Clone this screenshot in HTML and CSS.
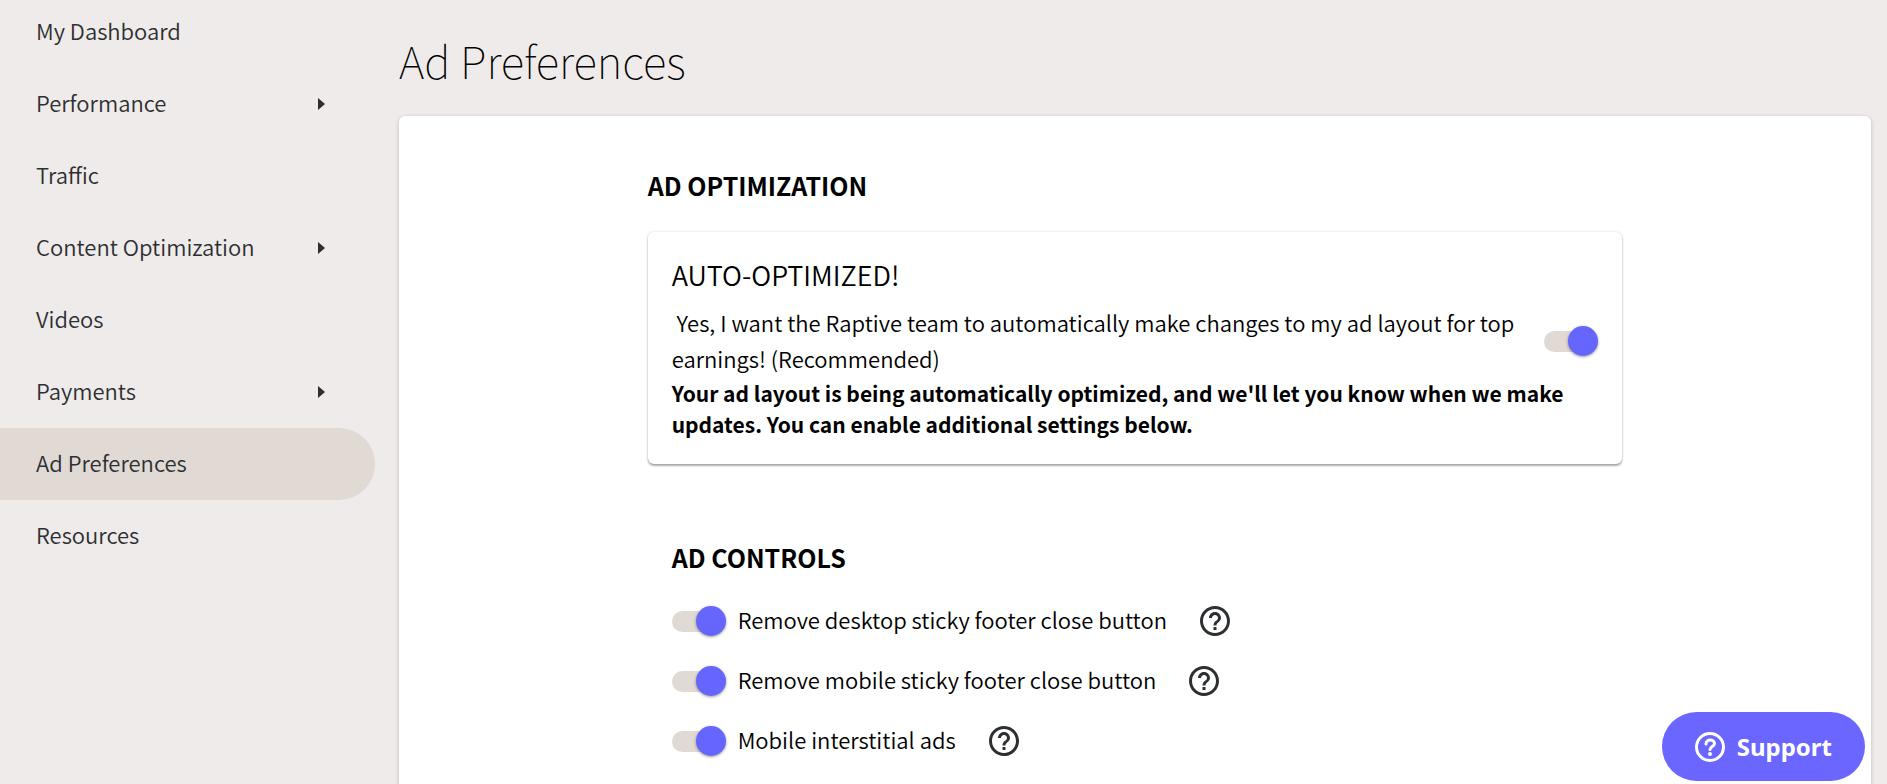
FILE: index.html
```html
<!DOCTYPE html>
<html lang="en">
<head>
    <meta charset="UTF-8">
    <meta name="viewport" content="width=device-width, initial-scale=1.0">
    <title>Ad Preferences</title>
    <link rel="stylesheet" href="styles.css">
</head>
<body>
    <!-- Shared icons -->
    <svg class="icon-defs" aria-hidden="true">
        <symbol id="icon-help" viewBox="0 0 24 24">
            <path d="M11 18h2v-2h-2v2zm1-16C6.48 2 2 6.48 2 12s4.48 10 10 10 10-4.48 10-10S17.52 2 12 2zm0 18c-4.41 0-8-3.59-8-8s3.59-8 8-8 8 3.59 8 8-3.59 8-8 8zm0-14c-2.21 0-4 1.79-4 4h2c0-1.1.9-2 2-2s2 .9 2 2c0 2-3 1.75-3 5h2c0-2.25 3-2.5 3-5 0-2.21-1.79-4-4-4z"/>
        </symbol>
        <symbol id="icon-arrow" viewBox="0 0 7 12">
            <path d="M0 0l7 6-7 6z"/>
        </symbol>
    </svg>

    <div class="layout">
        <nav class="sidebar">
            <a class="nav-link" href="#">My Dashboard</a>
            <a class="nav-link" href="#">Performance <svg class="nav-arrow"><use href="#icon-arrow"/></svg></a>
            <a class="nav-link" href="#">Traffic</a>
            <a class="nav-link" href="#">Content Optimization <svg class="nav-arrow"><use href="#icon-arrow"/></svg></a>
            <a class="nav-link" href="#">Videos</a>
            <a class="nav-link" href="#">Payments <svg class="nav-arrow"><use href="#icon-arrow"/></svg></a>
            <a class="nav-link active" href="#">Ad Preferences</a>
            <a class="nav-link" href="#">Resources</a>
        </nav>

        <main class="content">
            <h1 class="page-title">Ad Preferences</h1>

            <div class="panel">
                <div class="panel-inner">
                    <h2 class="section-title">AD OPTIMIZATION</h2>

                    <section class="card">
                        <h3 class="card-title">AUTO-OPTIMIZED!</h3>
                        <div class="card-row">
                            <label class="card-label" for="auto-optimize">&nbsp;Yes, I want the Raptive team to automatically make changes to my ad layout for top earnings! (Recommended)</label>
                            <input class="switch" type="checkbox" id="auto-optimize" checked>
                        </div>
                        <p class="card-note">Your ad layout is being automatically optimized, and we'll let you know when we make updates. You can enable additional settings below.</p>
                    </section>

                    <section class="controls">
                        <h2 class="section-title">AD CONTROLS</h2>
                        <div class="control-row">
                            <input class="switch" type="checkbox" id="desktop-footer" checked>
                            <label class="control-label" for="desktop-footer">Remove desktop sticky footer close button</label>
                            <button class="help-button" type="button" aria-label="Help"><svg class="help-icon"><use href="#icon-help"/></svg></button>
                        </div>
                        <div class="control-row">
                            <input class="switch" type="checkbox" id="mobile-footer" checked>
                            <label class="control-label" for="mobile-footer">Remove mobile sticky footer close button</label>
                            <button class="help-button" type="button" aria-label="Help"><svg class="help-icon"><use href="#icon-help"/></svg></button>
                        </div>
                        <div class="control-row">
                            <input class="switch" type="checkbox" id="interstitial" checked>
                            <label class="control-label" for="interstitial">Mobile interstitial ads</label>
                            <button class="help-button" type="button" aria-label="Help"><svg class="help-icon"><use href="#icon-help"/></svg></button>
                        </div>
                    </section>
                </div>
            </div>
        </main>
    </div>

    <button class="support-button" type="button">
        <svg class="support-icon" viewBox="0 0 30 30">
            <circle cx="15" cy="15" r="13.5" fill="none" stroke="currentColor" stroke-width="3"/>
            <path d="M11 12c0-5.500 8.500-5 8.500-.5 0 3-4.500 3-4.500 6" fill="none" stroke="currentColor" stroke-width="3" stroke-linecap="round"/>
            <circle cx="15" cy="22" r="2" fill="currentColor"/>
        </svg>
        Support
    </button>
</body>
</html>
```
FILE: styles.css
```css
:root {
    --color-background: #efebea;
    --color-active: #e0d9d4;
    --color-accent: #6666ff;
    --color-support: #6a66ff;
    --color-icon: #2d3032;
    --font-primary: 'Noto Sans CJK SC', sans-serif;
}

* {
    margin: 0;
    padding: 0;
    box-sizing: border-box;
}

body {
    font-family: var(--font-primary);
    font-size: 22px;
    font-weight: 350;
    line-height: 36px;
    color: #000;
    background: var(--color-background);
    overflow: hidden;
}

.icon-defs {
    display: none;
}

.layout {
    display: flex;
    gap: 24px;
    height: 100vh;
}

/* Sidebar */
.sidebar {
    width: 375px;
    flex-shrink: 0;
    margin-top: -4px;
}

.nav-link {
    display: flex;
    align-items: center;
    justify-content: space-between;
    height: 72px;
    padding: 0 50px 4px 36px;
    border-radius: 0 36px 36px 0;
    color: #2d3032;
    text-decoration: none;
}

.nav-link.active {
    background: var(--color-active);
}

.nav-arrow {
    width: 7px;
    height: 12px;
    margin-top: 4px;
    fill: currentColor;
}

/* Main content */
.content {
    flex: 1;
    margin-right: 16px;
}

.page-title {
    padding: 30px 0 26px;
    font-size: 44px;
    font-weight: 100;
    line-height: 60px;
}

.panel {
    min-height: 100vh;
    padding: 47px 5px;
    background: #fff;
    border-radius: 6px;
    box-shadow: 0 1px 4px rgba(0, 0, 0, 0.2);
}

.panel-inner {
    width: calc(100% * 2 / 3);
    margin: 0 auto;
}

.section-title {
    font-size: 25px;
    font-weight: 700;
    line-height: 44px;
}

/* Auto optimize card */
.card {
    margin-top: 25px;
    padding: 22px 24px 24px;
    border-radius: 6px;
    box-shadow: 0 2px 2px rgba(0, 0, 0, 0.3), 0 0 3px rgba(0, 0, 0, 0.15);
}

.card-title {
    margin-bottom: 8px;
    font-size: 27px;
    font-weight: 350;
    line-height: 42px;
}

.card-row {
    display: flex;
    align-items: center;
    gap: 24px;
}

.card-label {
    flex: 1;
    padding-bottom: 2px;
}

.card-note {
    font-size: 21px;
    font-weight: 700;
    line-height: 31px;
}

/* Toggle switch */
.switch {
    appearance: none;
    position: relative;
    flex-shrink: 0;
    width: 54px;
    height: 21px;
    border-radius: 11px;
    background: var(--color-active);
    cursor: pointer;
}

.switch::after {
    content: '';
    position: absolute;
    top: -5px;
    left: 0;
    width: 30px;
    height: 30px;
    border-radius: 50%;
    background: #fff;
    box-shadow: 0 1px 3px rgba(0, 0, 0, 0.4);
}

.switch:checked::after {
    left: 24px;
    background: var(--color-accent);
}

/* Ad controls */
.controls {
    padding: 71px 24px 24px;
}

.controls .section-title {
    margin-bottom: 12px;
}

.control-row {
    display: flex;
    align-items: center;
    gap: 12px;
    height: 60px;
}

.control-label {
    padding-bottom: 4px;
}

.help-button {
    display: flex;
    margin-left: 18px;
    border: none;
    background: none;
    cursor: pointer;
}

.help-icon {
    width: 36px;
    height: 36px;
    fill: var(--color-icon);
}

/* Floating support button */
.support-button {
    position: fixed;
    right: 22px;
    bottom: 3px;
    display: flex;
    align-items: center;
    gap: 12px;
    height: 69px;
    padding: 0 33px;
    border: none;
    border-radius: 35px;
    background: var(--color-support);
    color: #fff;
    font-family: 'Noto Sans', sans-serif;
    font-size: 24px;
    font-weight: 700;
    cursor: pointer;
}

.support-icon {
    width: 30px;
    height: 30px;
}
```
